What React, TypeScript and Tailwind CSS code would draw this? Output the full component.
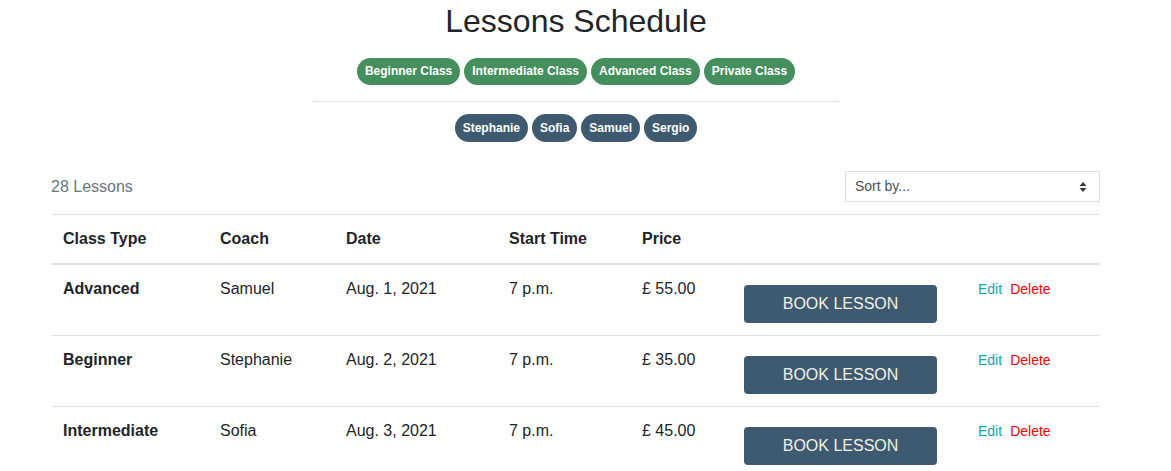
const classes = ["Beginner Class", "Intermediate Class", "Advanced Class", "Private Class"]
const coaches = ["Stephanie", "Sofia", "Samuel", "Sergio"]

const lessons = [
  { type: "Advanced", coach: "Samuel", date: "Aug. 1, 2021", time: "7 p.m.", price: "£ 55.00" },
  { type: "Beginner", coach: "Stephanie", date: "Aug. 2, 2021", time: "7 p.m.", price: "£ 35.00" },
  { type: "Intermediate", coach: "Sofia", date: "Aug. 3, 2021", time: "7 p.m.", price: "£ 45.00" },
]

export default function App() {
  return (
    <div className="min-h-screen bg-white text-[#212529] font-['Liberation_Sans',Arial,sans-serif]">
      {/* header */}
      <div className="flex flex-col items-center pt-[2px] pr-[19px]">
        <h1 className="text-[32px] leading-[38px] font-normal">Lessons Schedule</h1>
        <div className="mt-[18px] flex gap-[4px]">
          {classes.map((c) => (
            <span key={c} className="bg-[#458e5e] text-white text-[12px] font-bold h-[27px] leading-[27px] px-[8px] rounded-full">{c}</span>
          ))}
        </div>
        <hr className="w-[526px] mt-[16px] border-t border-[#e3e3e3]" />
        <div className="mt-[12px] flex gap-[4px]">
          {coaches.map((c) => (
            <span key={c} className="bg-[#3e5a70] text-white text-[12px] font-bold h-[28px] leading-[28px] px-[8px] rounded-full">{c}</span>
          ))}
        </div>
      </div>

      {/* lessons */}
      <div className="mx-[51px] w-[1049px] mt-[29px]">
        <div className="flex items-center justify-between">
          <span className="text-[16px] text-[#6c757d]">28 Lessons</span>
          <div className="w-[255px] h-[31px] border border-[#dcdfe3] flex items-center justify-between px-[9px] text-[14px] text-[#495057]">
            <span>Sort by...</span>
            <svg width="8" height="12" viewBox="0 0 8 12" className="mr-[3px]">
              <path d="M4 1 L7.5 5 H0.5 Z" fill="#343a40" />
              <path d="M4 11 L7.5 7 H0.5 Z" fill="#343a40" />
            </svg>
          </div>
        </div>

        <table className="w-full mt-[12px] border-collapse text-[16px] leading-[24px]">
          <thead>
            <tr className="border-t border-[#dee2e6] border-b-2">
              <th className="w-[157px] text-left font-bold px-[12px] py-[12px]">Class Type</th>
              <th className="w-[126px] text-left font-bold px-[12px] py-[12px]">Coach</th>
              <th className="w-[163px] text-left font-bold px-[12px] py-[12px]">Date</th>
              <th className="w-[133px] text-left font-bold px-[12px] py-[12px]">Start Time</th>
              <th className="w-[102px] text-left font-bold px-[12px] py-[12px]">Price</th>
              <th className="w-[234px]"></th>
              <th></th>
            </tr>
          </thead>
          <tbody>
            {lessons.map((l) => (
              <tr key={l.type} className="border-b border-[#dee2e6] align-top">
                <td className="px-[12px] py-[12px] font-bold">{l.type}</td>
                <td className="px-[12px] py-[12px]">{l.coach}</td>
                <td className="px-[12px] py-[12px]">{l.date}</td>
                <td className="px-[12px] py-[12px]">{l.time}</td>
                <td className="px-[12px] py-[12px]">{l.price}</td>
                <td className="px-[12px] py-[12px]">
                  <button className="mt-[8px] w-[193px] h-[38px] bg-[#3e5a70] text-[#f3f0e6] text-[16px] rounded-[4px]">BOOK LESSON</button>
                </td>
                <td className="px-[12px] py-[12px] text-[14px]">
                  <a className="text-[#17a2b8]">Edit</a>
                  <a className="ml-[8px] text-[#ff0000]">Delete</a>
                </td>
              </tr>
            ))}
          </tbody>
        </table>
      </div>
    </div>
  )
}
